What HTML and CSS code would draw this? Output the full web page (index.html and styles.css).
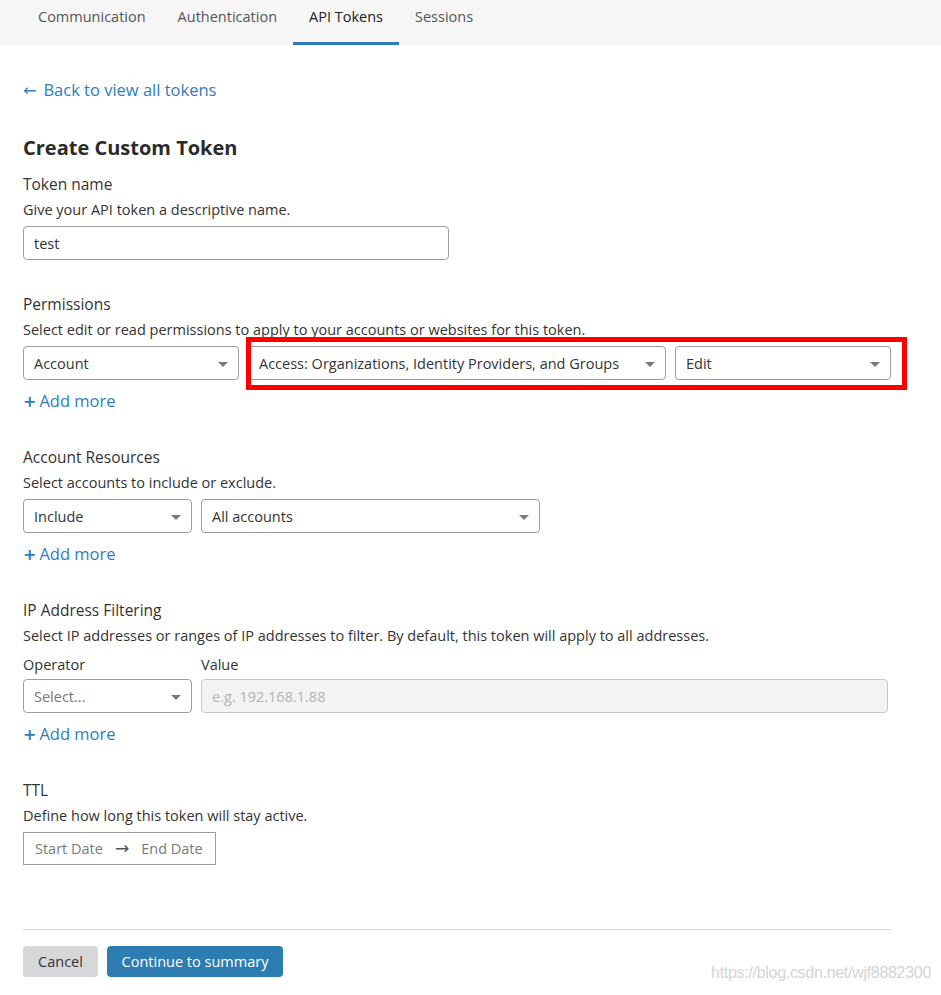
FILE: index.html
```html
<!DOCTYPE html>
<html lang="en">
<head>
<meta charset="utf-8">
<title>Create Custom Token</title>
<link rel="stylesheet" href="styles.css">
</head>
<body>
<nav class="tabs">
  <a class="tab">Communication</a>
  <a class="tab">Authentication</a>
  <a class="tab active">API Tokens</a>
  <a class="tab">Sessions</a>
</nav>
<main class="page">
  <a class="back"><span class="glyph">&larr;</span>Back to view all tokens</a>
  <h1 class="title">Create Custom Token</h1>

  <section class="section">
    <div class="label">Token name</div>
    <div class="desc">Give your API token a descriptive name.</div>
    <div class="input name-input">test</div>
  </section>

  <section class="section">
    <div class="label">Permissions</div>
    <div class="desc">Select edit or read permissions to apply to your accounts or websites for this token.</div>
    <div class="row perm-row">
      <div class="select w-account">Account<span class="caret"></span></div>
      <div class="select w-access">Access: Organizations, Identity Providers, and Groups<span class="caret"></span></div>
      <div class="select w-edit">Edit<span class="caret"></span></div>
      <div class="highlight"></div>
    </div>
    <a class="add"><span class="plus">+</span>Add more</a>
  </section>

  <section class="section">
    <div class="label">Account Resources</div>
    <div class="desc">Select accounts to include or exclude.</div>
    <div class="row">
      <div class="select w-small">Include<span class="caret"></span></div>
      <div class="select w-accounts">All accounts<span class="caret"></span></div>
    </div>
    <a class="add"><span class="plus">+</span>Add more</a>
  </section>

  <section class="section">
    <div class="label">IP Address Filtering</div>
    <div class="desc">Select IP addresses or ranges of IP addresses to filter. By default, this token will apply to all addresses.</div>
    <div class="row field-row">
      <div class="field w-small">
        <div class="sublabel">Operator</div>
        <div class="select placeholder">Select...<span class="caret"></span></div>
      </div>
      <div class="field w-value">
        <div class="sublabel">Value</div>
        <div class="input disabled">e.g. 192.168.1.88</div>
      </div>
    </div>
    <a class="add"><span class="plus">+</span>Add more</a>
  </section>

  <section class="section">
    <div class="label">TTL</div>
    <div class="desc">Define how long this token will stay active.</div>
    <div class="daterange">
      <span>Start Date</span>
      <span class="arrow">&rarr;</span>
      <span>End Date</span>
    </div>
  </section>

  <hr class="divider">
  <div class="actions">
    <button class="btn btn-cancel">Cancel</button>
    <button class="btn btn-primary">Continue to summary</button>
  </div>
</main>
<div class="watermark">https://blog.csdn.net/wjf8882300</div>
</body>
</html>
```
FILE: styles.css
```css
* { box-sizing: border-box; }
body {
  margin: 0;
  font-family: "Open Sans", "Noto Sans", sans-serif;
  color: #333;
  background: #fff;
  width: 941px;
  height: 995px;
  position: relative;
  overflow: hidden;
}
.tabs {
  display: flex;
  height: 45px;
  background: #f6f6f6;
  padding-left: 22px;
}
.tab {
  display: flex;
  align-items: center;
  padding: 0 16px 10px;
  font-size: 14.5px;
  color: #555;
  border-bottom: 3px solid transparent;
  white-space: nowrap;
}
.tab.active {
  color: #222;
  border-bottom-color: #2d7cb5;
}
.page {
  padding: 0 23px;
  width: 915px;
}
.back {
  display: block;
  height: 24px;
  margin-top: 33px;
  font-size: 16.5px;
  line-height: 24px;
  color: #2f7cbf;
}
.glyph {
  font-family: "DejaVu Sans", sans-serif;
  font-size: 16px;
  line-height: 0;
  margin-right: 7px;
}
.title {
  margin: 32px 0 0;
  height: 28px;
  font-size: 20px;
  line-height: 28px;
  font-weight: 700;
  color: #2b2b2b;
}
.section { margin-top: 11px; }
.section + .section { margin-top: 33px; }
.label {
  height: 22px;
  font-size: 15.5px;
  line-height: 22px;
  color: #333;
}
.desc {
  margin-top: 5px;
  height: 20px;
  font-size: 14.5px;
  line-height: 20px;
  color: #333;
  white-space: nowrap;
}
.input, .select {
  height: 34px;
  border: 1px solid #9c9c9c;
  border-radius: 4px;
  padding: 0 10px;
  display: flex;
  align-items: center;
  font-size: 14.5px;
  color: #333;
  background: #fff;
  white-space: nowrap;
}
.name-input { margin-top: 6px; width: 426px; }
.row {
  display: flex;
  gap: 9px;
  margin-top: 6px;
}
.perm-row { position: relative; }
.select { position: relative; padding-right: 30px; }
.caret {
  position: absolute;
  right: 10px;
  top: 15px;
  width: 0;
  height: 0;
  border-left: 5px solid transparent;
  border-right: 5px solid transparent;
  border-top: 5px solid #7a7a7a;
}
.w-account { width: 216px; }
.w-access { width: 418px; }
.w-edit { width: 216px; }
.w-small { width: 169px; }
.w-accounts { width: 339px; }
.w-value { width: 687px; }
.highlight {
  position: absolute;
  left: 223px;
  top: -9px;
  width: 661px;
  height: 53px;
  border: 5px solid #ff0000;
  pointer-events: none;
}
.add {
  display: block;
  height: 24px;
  margin-top: 9px;
  font-size: 16.5px;
  line-height: 24px;
  color: #2f7cbf;
}
.plus {
  font-family: "DejaVu Sans", sans-serif;
  font-weight: 700;
  font-size: 16px;
  line-height: 0;
  margin-right: 3px;
}
.field { display: flex; flex-direction: column; }
.sublabel {
  height: 20px;
  font-size: 14.5px;
  line-height: 20px;
  margin-bottom: 4px;
  color: #333;
}
.row.field-row { margin-top: 9px; }
.select.placeholder { color: #777; }
.input.disabled {
  background: #f2f3f3;
  border-color: #c9c9c9;
  color: #b4b4b4;
}
.daterange {
  margin-top: 6px;
  width: 193px;
  height: 33px;
  border: 1px solid #9c9c9c;
  display: flex;
  align-items: center;
  padding: 0 0 0 11px;
  gap: 12px;
  font-size: 14.5px;
  color: #7a7a7a;
  white-space: nowrap;
}
.daterange .arrow {
  color: #555;
  font-family: "DejaVu Sans", sans-serif;
  font-size: 17px;
  line-height: 1;
}
.divider {
  margin: 64px 0 0;
  width: 869px;
  border: 0;
  border-top: 1px solid #d9d9d9;
}
.actions {
  display: flex;
  gap: 9px;
  margin-top: 16px;
}
.btn {
  height: 31px;
  border: 0;
  border-radius: 4px;
  font-family: inherit;
  font-size: 14.5px;
  padding: 0;
  white-space: nowrap;
}
.btn-cancel { background: #d6d7d8; color: #333; width: 75px; }
.btn-primary { background: #2d7db3; color: #fff; width: 176px; }
.watermark {
  position: absolute;
  right: 10px;
  top: 964px;
  font-family: "Liberation Sans Narrow", "Liberation Sans", sans-serif;
  font-size: 16px;
  color: #d4d4d4;
  letter-spacing: -0.3px;
}
```
